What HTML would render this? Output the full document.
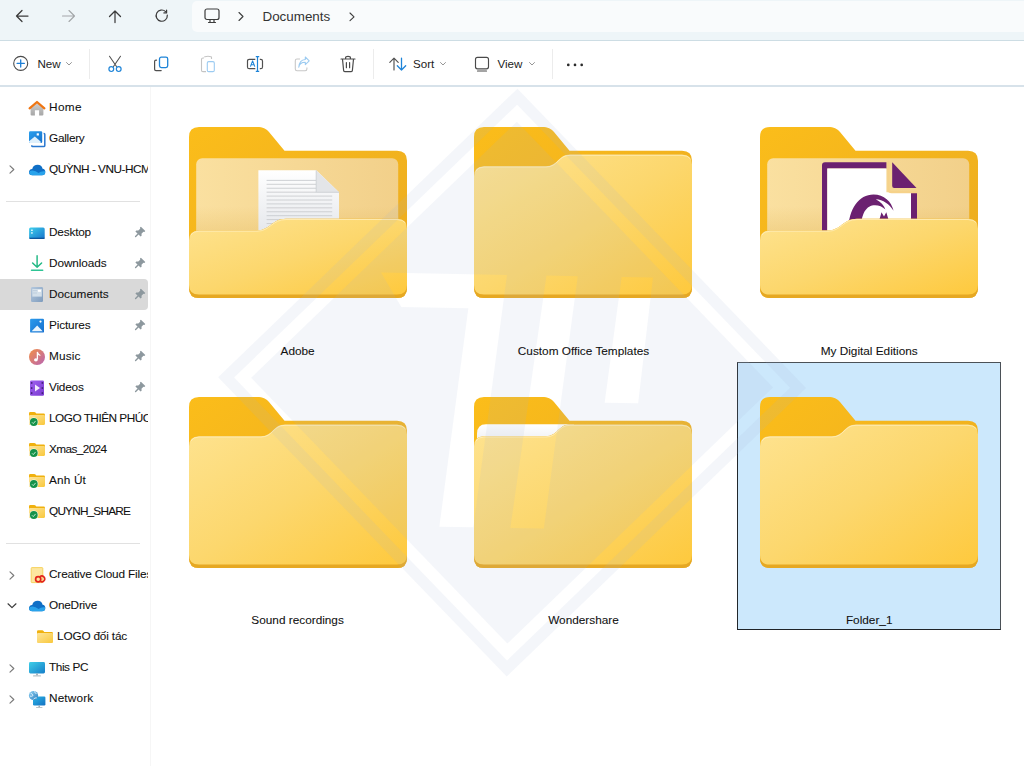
<!DOCTYPE html>
<html><head><meta charset="utf-8">
<style>
*{margin:0;padding:0;box-sizing:border-box}
html,body{width:1024px;height:766px;overflow:hidden;background:#fff}
body{position:relative;font-family:"Liberation Sans",sans-serif;color:#1a1a1a}
.abs{position:absolute}
#top{left:0;top:0;width:1024px;height:41px;background:#eef5f8;border-bottom:1px solid #cddde4}
#addr{left:192px;top:1px;width:840px;height:31px;background:#f9fbfc;border-radius:5px}
#tb{left:0;top:41px;width:1024px;height:46px;background:#fff;border-bottom:2px solid #d7e2ea}
.tbt{font-size:11.6px;color:#1c1c1c;top:57px;line-height:14px}
.sep{width:1px;background:#ececec}
#side{left:0;top:87px;width:151px;height:679px;background:#fff;border-right:1px solid #f6f6f6}
.si{position:absolute;left:0;height:31px;width:148px;font-size:11.8px;line-height:31px;color:#111;-webkit-text-stroke:0.08px #111;white-space:nowrap;overflow:hidden}
.si .t{position:absolute;left:50px;top:-0.4px}
.si svg{position:absolute}
.hsep{position:absolute;left:6px;width:134px;height:1px;background:#e1e1e1}
.lbl{position:absolute;font-size:11.8px;color:#111;-webkit-text-stroke:0.08px #111;text-align:center;width:260px;line-height:14px;white-space:nowrap}
.fold{position:absolute;width:218px;height:171px}
</style></head><body>
<div id="top" class="abs"></div>
<div id="addr" class="abs"></div>
<div id="tb" class="abs"></div>
<div id="side" class="abs"></div>
<!-- MAIN -->
<div class="abs" style="left:737px;top:362px;width:264px;height:268px;background:#cce8fc;border:1px solid #4b5157;border-left-color:#22272b;border-bottom-color:#1f2327"></div>
<svg class="abs" style="left:188.6px;top:127px" width="218" height="171" viewBox="0 0 218 171"><defs>
<linearGradient id="bk1" x1="0" y1="0" x2="1" y2="1"><stop offset="0" stop-color="#fbbd1a"/><stop offset="1" stop-color="#eaaa22"/></linearGradient>
<linearGradient id="fr1" x1="0" y1="0" x2="1" y2="1"><stop offset="0" stop-color="#fee390"/><stop offset="0.5" stop-color="#fcd76d"/><stop offset="1" stop-color="#fec93d"/></linearGradient>
<linearGradient id="ip1" x1="0" y1="0" x2="1" y2="0"><stop offset="0" stop-color="#fae0a0"/><stop offset="1" stop-color="#f2d08a"/></linearGradient>
<linearGradient id="sh1" x1="0" y1="0" x2="0" y2="1"><stop offset="0.6" stop-color="#d9a840" stop-opacity="0"/><stop offset="0.9" stop-color="#d9a840" stop-opacity="0.22"/></linearGradient>
<linearGradient id="pp1" x1="0" y1="0" x2="0" y2="1"><stop offset="0" stop-color="#ffffff"/><stop offset="1" stop-color="#dfe2e7"/></linearGradient>
</defs><path d="M0 10Q0 0 10 0H68C74 0 77 1.5 80 5L95.5 23.8H208Q218 23.8 218 33.8V161Q218 171 208 171H10Q0 171 0 161Z" fill="url(#bk1)"/><rect x="7.2" y="31.2" width="202" height="80" rx="6" fill="url(#ip1)"/><rect x="7.2" y="31.2" width="202" height="80" rx="6" fill="url(#sh1)"/><path d="M69.4 43.3H127.2L150 65.3V120H69.4Z" fill="url(#pp1)"/><path d="M77.6 53.40H127.2" stroke="#c9cccf" stroke-width="0.9"/><path d="M77.6 57.32H127.2" stroke="#c9cccf" stroke-width="0.9"/><path d="M77.6 61.24H127.2" stroke="#c9cccf" stroke-width="0.9"/><path d="M77.6 65.16H127.2" stroke="#c9cccf" stroke-width="0.9"/><path d="M77.6 69.08H143.2" stroke="#c9cccf" stroke-width="0.9"/><path d="M77.6 73.00H143.2" stroke="#c9cccf" stroke-width="0.9"/><path d="M77.6 76.92H143.2" stroke="#c9cccf" stroke-width="0.9"/><path d="M77.6 80.84H143.2" stroke="#c9cccf" stroke-width="0.9"/><path d="M77.6 84.76H143.2" stroke="#c9cccf" stroke-width="0.9"/><path d="M77.6 88.68H143.2" stroke="#c9cccf" stroke-width="0.9"/><path d="M77.6 92.60H143.2" stroke="#c9cccf" stroke-width="0.9"/><path d="M77.6 96.52H143.2" stroke="#c9cccf" stroke-width="0.9"/><path d="M77.6 100.44H143.2" stroke="#c9cccf" stroke-width="0.9"/><path d="M127.2 43.3L150 65.3H127.2Z" fill="#e3e5e8"/><path d="M127.2 43.3V65.3H150" fill="none" stroke="#c8cbd0" stroke-width="0.8"/><path d="M0 113.5Q0 103.5 10 103.5H68C81 103.5 83 91.8 97 91.8H208Q218 91.8 218 101.8V161Q218 171 208 171H10Q0 171 0 161Z" fill="#e6a822"/><path d="M0 113.5Q0 103.5 10 103.5H68C81 103.5 83 91.8 97 91.8H208Q218 91.8 218 101.8V158Q218 167.6 208 167.6H10Q0 167.6 0 158Z" fill="url(#fr1)"/><path d="M2 108Q4 104.2 10 104.2H68C81 104.2 83 92.5 97 92.5H208Q214 92.5 216.5 96" fill="none" stroke="#fff1c4" stroke-width="1" opacity="0.7"/></svg>
<svg class="abs" style="left:473.5px;top:127px" width="218" height="171" viewBox="0 0 218 171"><defs>
<linearGradient id="bk2" x1="0" y1="0" x2="1" y2="1"><stop offset="0" stop-color="#fbbd1a"/><stop offset="1" stop-color="#eaaa22"/></linearGradient>
<linearGradient id="fr2" x1="0" y1="0" x2="1" y2="1"><stop offset="0" stop-color="#fee390"/><stop offset="0.5" stop-color="#fcd76d"/><stop offset="1" stop-color="#fec93d"/></linearGradient>
<linearGradient id="ip2" x1="0" y1="0" x2="1" y2="0"><stop offset="0" stop-color="#fae0a0"/><stop offset="1" stop-color="#f2d08a"/></linearGradient>
<linearGradient id="sh2" x1="0" y1="0" x2="0" y2="1"><stop offset="0.6" stop-color="#d9a840" stop-opacity="0"/><stop offset="0.9" stop-color="#d9a840" stop-opacity="0.22"/></linearGradient>
<linearGradient id="pp2" x1="0" y1="0" x2="0" y2="1"><stop offset="0" stop-color="#ffffff"/><stop offset="1" stop-color="#dfe2e7"/></linearGradient>
</defs><path d="M0 10Q0 0 10 0H68C74 0 77 1.5 80 5L95.5 23.8H208Q218 23.8 218 33.8V161Q218 171 208 171H10Q0 171 0 161Z" fill="url(#bk2)"/><path d="M0 49.3Q0 39.3 10 39.3H72C84 39.3 84 27.6 96 27.6H208Q218 27.6 218 37.6V161Q218 171 208 171H10Q0 171 0 161Z" fill="#e6a822"/><path d="M0 49.3Q0 39.3 10 39.3H72C84 39.3 84 27.6 96 27.6H208Q218 27.6 218 37.6V158Q218 167.6 208 167.6H10Q0 167.6 0 158Z" fill="url(#fr2)"/><path d="M2 44Q4 40 10 40H72C84 40 84 28.3 96 28.3H208Q214 28.3 216.5 32" fill="none" stroke="#fff1c4" stroke-width="1" opacity="0.7"/></svg>
<svg class="abs" style="left:760.1px;top:127px" width="218" height="171" viewBox="0 0 218 171"><defs>
<linearGradient id="bk3" x1="0" y1="0" x2="1" y2="1"><stop offset="0" stop-color="#fbbd1a"/><stop offset="1" stop-color="#eaaa22"/></linearGradient>
<linearGradient id="fr3" x1="0" y1="0" x2="1" y2="1"><stop offset="0" stop-color="#fee390"/><stop offset="0.5" stop-color="#fcd76d"/><stop offset="1" stop-color="#fec93d"/></linearGradient>
<linearGradient id="ip3" x1="0" y1="0" x2="1" y2="0"><stop offset="0" stop-color="#fae0a0"/><stop offset="1" stop-color="#f2d08a"/></linearGradient>
<linearGradient id="sh3" x1="0" y1="0" x2="0" y2="1"><stop offset="0.6" stop-color="#d9a840" stop-opacity="0"/><stop offset="0.9" stop-color="#d9a840" stop-opacity="0.22"/></linearGradient>
<linearGradient id="pp3" x1="0" y1="0" x2="0" y2="1"><stop offset="0" stop-color="#ffffff"/><stop offset="1" stop-color="#dfe2e7"/></linearGradient>
</defs><path d="M0 10Q0 0 10 0H68C74 0 77 1.5 80 5L95.5 23.8H208Q218 23.8 218 33.8V161Q218 171 208 171H10Q0 171 0 161Z" fill="url(#bk3)"/><rect x="7.2" y="31.2" width="202" height="80" rx="6" fill="url(#ip3)"/><rect x="7.2" y="31.2" width="202" height="80" rx="6" fill="url(#sh3)"/><path d="M62 38.3Q62 35.3 65 35.3H126.4V41.5H67.3V120H62Z" fill="#6b2170"/><path d="M67.3 41.5H126.4V65.2H157V120H67.3Z" fill="#fff"/><path d="M151 65.2H157V120H151Z" fill="#6b2170"/><path d="M132.2 35.3L156.5 61H134.2Q132.2 61 132.2 59Z" fill="#6b2170"/><path d="M128.5 34V62Q128.5 65.2 131.7 65.2H157" fill="none" stroke="#f6d28a" stroke-width="2.2"/><path d="M88.3 104C88.3 82 99 67.5 113.5 67.5C124 67.5 131.5 74.5 133.6 83.8C129.5 77 123 72.6 115.8 72.2C121 74.8 124.3 78.5 125.4 82.6C122.5 79.8 119 78.3 115 78.3C106.5 78.3 100.8 86 100.8 104Z" fill="#6b2170"/><path d="M119.6 92L121.5 85.3L124 89.5L126.3 85.3L128.3 92Z" fill="#6b2170"/><path d="M0 113.5Q0 103.5 10 103.5H68C81 103.5 83 91.8 97 91.8H208Q218 91.8 218 101.8V161Q218 171 208 171H10Q0 171 0 161Z" fill="#e6a822"/><path d="M0 113.5Q0 103.5 10 103.5H68C81 103.5 83 91.8 97 91.8H208Q218 91.8 218 101.8V158Q218 167.6 208 167.6H10Q0 167.6 0 158Z" fill="url(#fr3)"/><path d="M2 108Q4 104.2 10 104.2H68C81 104.2 83 92.5 97 92.5H208Q214 92.5 216.5 96" fill="none" stroke="#fff1c4" stroke-width="1" opacity="0.7"/></svg>
<svg class="abs" style="left:188.6px;top:396.7px" width="218" height="171" viewBox="0 0 218 171"><defs>
<linearGradient id="bk4" x1="0" y1="0" x2="1" y2="1"><stop offset="0" stop-color="#fbbd1a"/><stop offset="1" stop-color="#eaaa22"/></linearGradient>
<linearGradient id="fr4" x1="0" y1="0" x2="1" y2="1"><stop offset="0" stop-color="#fee390"/><stop offset="0.5" stop-color="#fcd76d"/><stop offset="1" stop-color="#fec93d"/></linearGradient>
<linearGradient id="ip4" x1="0" y1="0" x2="1" y2="0"><stop offset="0" stop-color="#fae0a0"/><stop offset="1" stop-color="#f2d08a"/></linearGradient>
<linearGradient id="sh4" x1="0" y1="0" x2="0" y2="1"><stop offset="0.6" stop-color="#d9a840" stop-opacity="0"/><stop offset="0.9" stop-color="#d9a840" stop-opacity="0.22"/></linearGradient>
<linearGradient id="pp4" x1="0" y1="0" x2="0" y2="1"><stop offset="0" stop-color="#ffffff"/><stop offset="1" stop-color="#dfe2e7"/></linearGradient>
</defs><path d="M0 10Q0 0 10 0H68C74 0 77 1.5 80 5L95.5 23.8H208Q218 23.8 218 33.8V161Q218 171 208 171H10Q0 171 0 161Z" fill="url(#bk4)"/><path d="M0 49.3Q0 39.3 10 39.3H72C84 39.3 84 27.6 96 27.6H208Q218 27.6 218 37.6V161Q218 171 208 171H10Q0 171 0 161Z" fill="#e6a822"/><path d="M0 49.3Q0 39.3 10 39.3H72C84 39.3 84 27.6 96 27.6H208Q218 27.6 218 37.6V158Q218 167.6 208 167.6H10Q0 167.6 0 158Z" fill="url(#fr4)"/><path d="M2 44Q4 40 10 40H72C84 40 84 28.3 96 28.3H208Q214 28.3 216.5 32" fill="none" stroke="#fff1c4" stroke-width="1" opacity="0.7"/></svg>
<svg class="abs" style="left:473.5px;top:396.7px" width="218" height="171" viewBox="0 0 218 171"><defs>
<linearGradient id="bk5" x1="0" y1="0" x2="1" y2="1"><stop offset="0" stop-color="#fbbd1a"/><stop offset="1" stop-color="#eaaa22"/></linearGradient>
<linearGradient id="fr5" x1="0" y1="0" x2="1" y2="1"><stop offset="0" stop-color="#fee390"/><stop offset="0.5" stop-color="#fcd76d"/><stop offset="1" stop-color="#fec93d"/></linearGradient>
<linearGradient id="ip5" x1="0" y1="0" x2="1" y2="0"><stop offset="0" stop-color="#fae0a0"/><stop offset="1" stop-color="#f2d08a"/></linearGradient>
<linearGradient id="sh5" x1="0" y1="0" x2="0" y2="1"><stop offset="0.6" stop-color="#d9a840" stop-opacity="0"/><stop offset="0.9" stop-color="#d9a840" stop-opacity="0.22"/></linearGradient>
<linearGradient id="pp5" x1="0" y1="0" x2="0" y2="1"><stop offset="0" stop-color="#ffffff"/><stop offset="1" stop-color="#dfe2e7"/></linearGradient>
</defs><path d="M0 10Q0 0 10 0H68C74 0 77 1.5 80 5L95.5 23.8H208Q218 23.8 218 33.8V161Q218 171 208 171H10Q0 171 0 161Z" fill="url(#bk5)"/><path d="M3 37Q3 27.3 12 27.3H100V60H3Z" fill="url(#pp5)"/><path d="M0 49.3Q0 39.3 10 39.3H72C84 39.3 84 27.6 96 27.6H208Q218 27.6 218 37.6V161Q218 171 208 171H10Q0 171 0 161Z" fill="#e6a822"/><path d="M0 49.3Q0 39.3 10 39.3H72C84 39.3 84 27.6 96 27.6H208Q218 27.6 218 37.6V158Q218 167.6 208 167.6H10Q0 167.6 0 158Z" fill="url(#fr5)"/><path d="M2 44Q4 40 10 40H72C84 40 84 28.3 96 28.3H208Q214 28.3 216.5 32" fill="none" stroke="#fff1c4" stroke-width="1" opacity="0.7"/></svg>
<svg class="abs" style="left:760.1px;top:396.7px" width="218" height="171" viewBox="0 0 218 171"><defs>
<linearGradient id="bk6" x1="0" y1="0" x2="1" y2="1"><stop offset="0" stop-color="#fbbd1a"/><stop offset="1" stop-color="#eaaa22"/></linearGradient>
<linearGradient id="fr6" x1="0" y1="0" x2="1" y2="1"><stop offset="0" stop-color="#fee390"/><stop offset="0.5" stop-color="#fcd76d"/><stop offset="1" stop-color="#fec93d"/></linearGradient>
<linearGradient id="ip6" x1="0" y1="0" x2="1" y2="0"><stop offset="0" stop-color="#fae0a0"/><stop offset="1" stop-color="#f2d08a"/></linearGradient>
<linearGradient id="sh6" x1="0" y1="0" x2="0" y2="1"><stop offset="0.6" stop-color="#d9a840" stop-opacity="0"/><stop offset="0.9" stop-color="#d9a840" stop-opacity="0.22"/></linearGradient>
<linearGradient id="pp6" x1="0" y1="0" x2="0" y2="1"><stop offset="0" stop-color="#ffffff"/><stop offset="1" stop-color="#dfe2e7"/></linearGradient>
</defs><path d="M0 10Q0 0 10 0H68C74 0 77 1.5 80 5L95.5 23.8H208Q218 23.8 218 33.8V161Q218 171 208 171H10Q0 171 0 161Z" fill="url(#bk6)"/><path d="M0 49.3Q0 39.3 10 39.3H72C84 39.3 84 27.6 96 27.6H208Q218 27.6 218 37.6V161Q218 171 208 171H10Q0 171 0 161Z" fill="#e6a822"/><path d="M0 49.3Q0 39.3 10 39.3H72C84 39.3 84 27.6 96 27.6H208Q218 27.6 218 37.6V158Q218 167.6 208 167.6H10Q0 167.6 0 158Z" fill="url(#fr6)"/><path d="M2 44Q4 40 10 40H72C84 40 84 28.3 96 28.3H208Q214 28.3 216.5 32" fill="none" stroke="#fff1c4" stroke-width="1" opacity="0.7"/></svg>
<svg class="abs" style="left:0;top:0;pointer-events:none" width="1024" height="766" viewBox="0 0 1024 766"><path fill-rule="evenodd" transform="rotate(1.05 512.1 382.6)" d="M512.1 88.6L806.1 382.6L512.1 676.6L218.1 382.6Z M512.1 104.6L790.1 382.6L512.1 660.6L234.1 382.6Z" fill="#a3b4d5" fill-opacity="0.12"/><defs><mask id="wmm"><rect width="1024" height="766" fill="#fff"/><path d="M379 275L505 275L476 528L442 528L467 309L400 309Z M544.5 275L575.8 275L546.5 528L513 528Z M619.7 275L651 275L638.5 401L605 401Z" fill="#000"/></mask></defs><path mask="url(#wmm)" transform="rotate(1.05 512.1 382.6)" d="M512.1 121.6L773.1 382.6L512.1 643.6L251.1 382.6Z" fill="#a3b4d5" fill-opacity="0.12"/></svg>
<div class="lbl" style="left:167.6px;top:344px">Adobe</div>
<div class="lbl" style="left:453.5px;top:344px">Custom Office Templates</div>
<div class="lbl" style="left:739.2px;top:344px">My Digital Editions</div>
<div class="lbl" style="left:167.6px;top:613.3px">Sound recordings</div>
<div class="lbl" style="left:453.5px;top:613.3px">Wondershare</div>
<div class="lbl" style="left:739.2px;top:613.3px">Folder_1</div>
<!-- /MAIN -->
<!-- SIDE -->
<div class="si" style="top:92.0px"><svg style="left:28px;top:7px" width="18" height="18" viewBox="0 0 18 18"><defs><linearGradient id="hg" x1="0" y1="0" x2="0" y2="1"><stop offset="0" stop-color="#d2d2d2"/><stop offset="1" stop-color="#a6a6a6"/></linearGradient></defs><path d="M2.6 8.2L9 3L15.4 8.2V15.4Q15.4 16.5 14.3 16.5H11.1V11.2H6.9V16.5H3.7Q2.6 16.5 2.6 15.4Z" fill="url(#hg)"/><path d="M1.6 9.4L9 3L16.4 9.4" fill="none" stroke="#ef7512" stroke-width="2.2" stroke-linecap="round" stroke-linejoin="round"/></svg><span class="t" style="left:49px;letter-spacing:0.383px">Home</span></div>
<div class="si" style="top:123.0px"><svg style="left:28px;top:7px" width="18" height="18" viewBox="0 0 18 18"><defs><linearGradient id="gg" x1="0" y1="0" x2="1" y2="1"><stop offset="0" stop-color="#2aa0ee"/><stop offset="1" stop-color="#1570cc"/></linearGradient></defs><path d="M15.6 3.6H16Q16.8 3.6 16.8 4.4V15.4Q16.8 16.5 15.7 16.5H4.6Q3.8 16.5 3.8 15.7V15.3" fill="none" stroke="#2a78d0" stroke-width="1.5"/><rect x="1" y="1.2" width="13.2" height="11.8" rx="1.2" fill="url(#gg)"/><path d="M1 11.3L6.8 6.5L12.6 11.5V13H2.2Q1 13 1 11.8Z" fill="#dff0fc"/><rect x="8.7" y="3.3" width="2.2" height="2.2" fill="#fff"/></svg><span class="t" style="left:49px;letter-spacing:-0.268px">Gallery</span></div>
<div class="si" style="top:154.0px"><svg style="left:7px;top:10px" width="10" height="11" viewBox="0 0 10 11" fill="none" stroke="#7a7a7a" stroke-width="1.15" stroke-linecap="round" stroke-linejoin="round"><path d="M3 1.8L6.8 5.5L3 9.2"/></svg><svg style="left:28px;top:9px" width="18" height="13" viewBox="0 0 18 13"><path d="M4.3 12.2Q1 12.2 1 9.2Q1 6.3 4.2 6Q5.4 1.8 9.7 1.8Q13.7 1.8 14.6 5.7Q17.3 6.1 17.3 9Q17.3 12.2 14 12.2Z" fill="#0f6fc6"/><path d="M1.1 9.6Q1.6 7.2 4.6 7.4Q7.5 7.6 10.6 10.1Q13 7.6 17.2 8.3Q17.5 12.2 14 12.2H4.3Q1.4 12.2 1.1 9.6Z" fill="#29a3eb"/></svg><span class="t" style="left:49px;letter-spacing:-0.5px">QUỲNH - VNU-HCM</span></div>
<div class="si" style="top:217.0px"><svg style="left:28px;top:8px" width="18" height="16" viewBox="0 0 18 16"><defs><linearGradient id="dg" x1="0" y1="0" x2="1" y2="1"><stop offset="0" stop-color="#40d0ec"/><stop offset="1" stop-color="#1673cc"/></linearGradient></defs><rect x="1.1" y="2.4" width="15.6" height="11.6" rx="1.5" fill="url(#dg)"/><path d="M1.5 13.3H16.5" stroke="#0c4e96" stroke-width="1.2"/><rect x="3" y="4.6" width="1.8" height="1.3" fill="#e6f7fc"/><rect x="3" y="7.3" width="1.8" height="1.3" fill="#e6f7fc"/></svg><span class="t" style="left:49px;letter-spacing:-0.183px">Desktop</span><svg style="left:134px;top:8.5px" width="12" height="12" viewBox="0 0 12 12"><path d="M6.9 0.7L11.3 5.1L10.4 6L9.4 5.8L7.5 7.7L7.6 9.7L6.6 10.6L1.4 5.4L2.3 4.5L4.3 4.6L6.2 2.7L6 1.6Z" fill="#8d989e"/><path d="M4.3 7.7L1.6 10.4" stroke="#8d989e" stroke-width="1.4" stroke-linecap="round"/></svg></div>
<div class="si" style="top:248.0px"><svg style="left:28px;top:6px" width="18" height="18" viewBox="0 0 18 18" fill="none" stroke="#21b884" stroke-width="1.45" stroke-linecap="round" stroke-linejoin="round"><path d="M9.1 1.7V13.3M4.6 8.9L9.1 13.3L13.6 8.9"/><path d="M3.5 16.2H14.7" stroke="#2dc494"/></svg><span class="t" style="left:49px;letter-spacing:-0.097px">Downloads</span><svg style="left:134px;top:8.5px" width="12" height="12" viewBox="0 0 12 12"><path d="M6.9 0.7L11.3 5.1L10.4 6L9.4 5.8L7.5 7.7L7.6 9.7L6.6 10.6L1.4 5.4L2.3 4.5L4.3 4.6L6.2 2.7L6 1.6Z" fill="#8d989e"/><path d="M4.3 7.7L1.6 10.4" stroke="#8d989e" stroke-width="1.4" stroke-linecap="round"/></svg></div>
<div class="si" style="top:279px;background:#d9d9d9;border-radius:0 4px 4px 0"><svg style="left:29px;top:7px" width="16" height="17" viewBox="0 0 16 17"><defs><linearGradient id="og" x1="0" y1="0" x2="1" y2="1"><stop offset="0" stop-color="#b5c9de"/><stop offset="1" stop-color="#7f9cbd"/></linearGradient></defs><rect x="2" y="1" width="12" height="15" rx="1.2" fill="url(#og)"/><rect x="3.3" y="3" width="9.5" height="7.6" fill="#d4e0ea"/><rect x="9" y="3.8" width="3" height="2" fill="#fff"/><path d="M3.8 4.6H8M3.8 7H8" stroke="#b9cadb" stroke-width="0.8"/></svg><span class="t" style="left:49px;letter-spacing:0.003px">Documents</span><svg style="left:134px;top:8.5px" width="12" height="12" viewBox="0 0 12 12"><path d="M6.9 0.7L11.3 5.1L10.4 6L9.4 5.8L7.5 7.7L7.6 9.7L6.6 10.6L1.4 5.4L2.3 4.5L4.3 4.6L6.2 2.7L6 1.6Z" fill="#8d989e"/><path d="M4.3 7.7L1.6 10.4" stroke="#8d989e" stroke-width="1.4" stroke-linecap="round"/></svg></div>
<div class="si" style="top:310.0px"><svg style="left:28px;top:8px" width="18" height="16" viewBox="0 0 18 16"><defs><linearGradient id="pg" x1="0" y1="0" x2="1" y2="1"><stop offset="0" stop-color="#2b9bec"/><stop offset="1" stop-color="#156fcf"/></linearGradient></defs><rect x="2.1" y="0.8" width="13.9" height="13.8" rx="1.2" fill="url(#pg)"/><path d="M3.6 13.2L9.2 7.6L14.7 13.2Z" fill="#eaf5fd"/><circle cx="12.5" cy="3.6" r="1.1" fill="#fff"/></svg><span class="t" style="left:49px;letter-spacing:-0.153px">Pictures</span><svg style="left:134px;top:8.5px" width="12" height="12" viewBox="0 0 12 12"><path d="M6.9 0.7L11.3 5.1L10.4 6L9.4 5.8L7.5 7.7L7.6 9.7L6.6 10.6L1.4 5.4L2.3 4.5L4.3 4.6L6.2 2.7L6 1.6Z" fill="#8d989e"/><path d="M4.3 7.7L1.6 10.4" stroke="#8d989e" stroke-width="1.4" stroke-linecap="round"/></svg></div>
<div class="si" style="top:341.0px"><svg style="left:28px;top:7px" width="18" height="18" viewBox="0 0 18 18"><defs><linearGradient id="mg" x1="0" y1="0" x2="1" y2="1"><stop offset="0" stop-color="#f39045"/><stop offset="1" stop-color="#b864b4"/></linearGradient></defs><circle cx="9" cy="9" r="8" fill="url(#mg)"/><path d="M9.4 4.2V11.3" stroke="#fff" stroke-width="1.3"/><path d="M9.4 4.2Q10.2 6.5 12 7.3" fill="none" stroke="#fff" stroke-width="1.1" stroke-linecap="round"/><ellipse cx="7.9" cy="11.8" rx="1.9" ry="1.6" fill="#fff"/></svg><span class="t" style="left:49px;letter-spacing:0.138px">Music</span><svg style="left:134px;top:8.5px" width="12" height="12" viewBox="0 0 12 12"><path d="M6.9 0.7L11.3 5.1L10.4 6L9.4 5.8L7.5 7.7L7.6 9.7L6.6 10.6L1.4 5.4L2.3 4.5L4.3 4.6L6.2 2.7L6 1.6Z" fill="#8d989e"/><path d="M4.3 7.7L1.6 10.4" stroke="#8d989e" stroke-width="1.4" stroke-linecap="round"/></svg></div>
<div class="si" style="top:372.0px"><svg style="left:28px;top:8px" width="18" height="17" viewBox="0 0 18 17"><defs><linearGradient id="vg" x1="0" y1="0" x2="1" y2="1"><stop offset="0" stop-color="#a05ff0"/><stop offset="1" stop-color="#7a3cd0"/></linearGradient></defs><rect x="2" y="0.5" width="14" height="15.2" rx="1.3" fill="url(#vg)"/><path d="M7 4.5L12 8L7 11.5Z" fill="#f3eafc"/><g fill="#3a1a6a"><rect x="2.9" y="2.2" width="1.5" height="1.5"/><rect x="2.9" y="7.3" width="1.5" height="1.5"/><rect x="2.9" y="12.3" width="1.5" height="1.5"/><rect x="13.6" y="2.2" width="1.5" height="1.5"/><rect x="13.6" y="7.3" width="1.5" height="1.5"/><rect x="13.6" y="12.3" width="1.5" height="1.5"/></g></svg><span class="t" style="left:49px;letter-spacing:-0.21px">Videos</span><svg style="left:134px;top:8.5px" width="12" height="12" viewBox="0 0 12 12"><path d="M6.9 0.7L11.3 5.1L10.4 6L9.4 5.8L7.5 7.7L7.6 9.7L6.6 10.6L1.4 5.4L2.3 4.5L4.3 4.6L6.2 2.7L6 1.6Z" fill="#8d989e"/><path d="M4.3 7.7L1.6 10.4" stroke="#8d989e" stroke-width="1.4" stroke-linecap="round"/></svg></div>
<div class="si" style="top:403.0px"><svg style="left:28px;top:6px" width="18" height="17" viewBox="0 0 18 17"><defs><linearGradient id="sf1" x1="0" y1="0" x2="1" y2="1"><stop offset="0" stop-color="#fde49a"/><stop offset="1" stop-color="#f9c83c"/></linearGradient></defs><path d="M1 4.3Q1 3 2.3 3H6.3Q7 3 7.5 3.6L8.3 4.6H15.7Q17 4.6 17 5.9V7H1Z" fill="#f0b10e"/><rect x="1" y="5.9" width="16" height="10" rx="1.1" fill="url(#sf1)"/><circle cx="5.8" cy="13" r="4.6" fill="#fff" opacity="0.85"/><circle cx="5.8" cy="13" r="3.9" fill="#15924a"/><path d="M4 13.3L5.3 14.6L7.6 11.9" fill="none" stroke="#bfe8cf" stroke-width="1"/></svg><span class="t" style="left:49px;letter-spacing:-0.5px">LOGO THIÊN PHÚC</span></div>
<div class="si" style="top:434.0px"><svg style="left:28px;top:6px" width="18" height="17" viewBox="0 0 18 17"><defs><linearGradient id="sf2" x1="0" y1="0" x2="1" y2="1"><stop offset="0" stop-color="#fde49a"/><stop offset="1" stop-color="#f9c83c"/></linearGradient></defs><path d="M1 4.3Q1 3 2.3 3H6.3Q7 3 7.5 3.6L8.3 4.6H15.7Q17 4.6 17 5.9V7H1Z" fill="#f0b10e"/><rect x="1" y="5.9" width="16" height="10" rx="1.1" fill="url(#sf2)"/><circle cx="5.8" cy="13" r="4.6" fill="#fff" opacity="0.85"/><circle cx="5.8" cy="13" r="3.9" fill="#15924a"/><path d="M4 13.3L5.3 14.6L7.6 11.9" fill="none" stroke="#bfe8cf" stroke-width="1"/></svg><span class="t" style="left:49px;letter-spacing:-0.608px">Xmas_2024</span></div>
<div class="si" style="top:465.0px"><svg style="left:28px;top:6px" width="18" height="17" viewBox="0 0 18 17"><defs><linearGradient id="sf3" x1="0" y1="0" x2="1" y2="1"><stop offset="0" stop-color="#fde49a"/><stop offset="1" stop-color="#f9c83c"/></linearGradient></defs><path d="M1 4.3Q1 3 2.3 3H6.3Q7 3 7.5 3.6L8.3 4.6H15.7Q17 4.6 17 5.9V7H1Z" fill="#f0b10e"/><rect x="1" y="5.9" width="16" height="10" rx="1.1" fill="url(#sf3)"/><circle cx="5.8" cy="13" r="4.6" fill="#fff" opacity="0.85"/><circle cx="5.8" cy="13" r="3.9" fill="#15924a"/><path d="M4 13.3L5.3 14.6L7.6 11.9" fill="none" stroke="#bfe8cf" stroke-width="1"/></svg><span class="t" style="left:49px;letter-spacing:0.153px">Anh Út</span></div>
<div class="si" style="top:496.0px"><svg style="left:28px;top:6px" width="18" height="17" viewBox="0 0 18 17"><defs><linearGradient id="sf4" x1="0" y1="0" x2="1" y2="1"><stop offset="0" stop-color="#fde49a"/><stop offset="1" stop-color="#f9c83c"/></linearGradient></defs><path d="M1 4.3Q1 3 2.3 3H6.3Q7 3 7.5 3.6L8.3 4.6H15.7Q17 4.6 17 5.9V7H1Z" fill="#f0b10e"/><rect x="1" y="5.9" width="16" height="10" rx="1.1" fill="url(#sf4)"/><circle cx="5.8" cy="13" r="4.6" fill="#fff" opacity="0.85"/><circle cx="5.8" cy="13" r="3.9" fill="#15924a"/><path d="M4 13.3L5.3 14.6L7.6 11.9" fill="none" stroke="#bfe8cf" stroke-width="1"/></svg><span class="t" style="left:49px;letter-spacing:-0.801px">QUYNH_SHARE</span></div>
<div class="si" style="top:559.5px"><svg style="left:7px;top:10px" width="10" height="11" viewBox="0 0 10 11" fill="none" stroke="#7a7a7a" stroke-width="1.15" stroke-linecap="round" stroke-linejoin="round"><path d="M3 1.8L6.8 5.5L3 9.2"/></svg><svg style="left:28px;top:6px" width="18" height="18" viewBox="0 0 18 18"><rect x="3.2" y="1.6" width="11.6" height="15" rx="0.8" fill="#fde7a0" stroke="#f5cf55" stroke-width="0.9"/><circle cx="10.2" cy="13.3" r="2.6" fill="none" stroke="#e3261c" stroke-width="1.7"/><path d="M12 10.6A2.9 2.9 0 1 1 12.2 15.4" fill="none" stroke="#e3261c" stroke-width="1.7"/></svg><span class="t" style="left:49px;letter-spacing:-0.15px">Creative Cloud Files</span></div>
<div class="si" style="top:590.5px"><svg style="left:6px;top:10px" width="12" height="10" viewBox="0 0 12 10" fill="none" stroke="#3a3a3a" stroke-width="1.2" stroke-linecap="round" stroke-linejoin="round"><path d="M2 2.8L6 6.6L10 2.8"/></svg><svg style="left:28px;top:8px" width="18" height="13" viewBox="0 0 18 13"><path d="M4.3 12.2Q1 12.2 1 9.2Q1 6.3 4.2 6Q5.4 1.8 9.7 1.8Q13.7 1.8 14.6 5.7Q17.3 6.1 17.3 9Q17.3 12.2 14 12.2Z" fill="#0f6fc6"/><path d="M1.1 9.6Q1.6 7.2 4.6 7.4Q7.5 7.6 10.6 10.1Q13 7.6 17.2 8.3Q17.5 12.2 14 12.2H4.3Q1.4 12.2 1.1 9.6Z" fill="#29a3eb"/></svg><span class="t" style="left:49px;letter-spacing:-0.229px">OneDrive</span></div>
<div class="si" style="top:621.5px"><svg style="left:36px;top:6px" width="18" height="16" viewBox="0 0 18 16"><defs><linearGradient id="lf" x1="0" y1="0" x2="1" y2="1"><stop offset="0" stop-color="#fde49a"/><stop offset="1" stop-color="#f9c83c"/></linearGradient></defs><path d="M1 3.6Q1 2.3 2.3 2.3H6.3Q7 2.3 7.5 2.9L8.3 3.9H15.7Q17 3.9 17 5.2V6.5H1Z" fill="#f0b10e"/><rect x="1" y="5" width="16" height="10" rx="1.1" fill="url(#lf)"/></svg><span class="t" style="left:57px;letter-spacing:-0.177px">LOGO đối tác</span></div>
<div class="si" style="top:652.5px"><svg style="left:7px;top:10px" width="10" height="11" viewBox="0 0 10 11" fill="none" stroke="#7a7a7a" stroke-width="1.15" stroke-linecap="round" stroke-linejoin="round"><path d="M3 1.8L6.8 5.5L3 9.2"/></svg><svg style="left:28px;top:7px" width="18" height="18" viewBox="0 0 18 18"><defs><linearGradient id="tg" x1="0" y1="0" x2="1" y2="1"><stop offset="0" stop-color="#3fcfe8"/><stop offset="1" stop-color="#157dc9"/></linearGradient></defs><rect x="1" y="2" width="16" height="11.5" rx="1.4" fill="url(#tg)"/><rect x="8.2" y="13.5" width="1.6" height="2" fill="#9aa6ad"/><rect x="5" y="15.3" width="8" height="1.3" rx="0.5" fill="#b9c3c9"/></svg><span class="t" style="left:49px;letter-spacing:-0.421px">This PC</span></div>
<div class="si" style="top:683.5px"><svg style="left:7px;top:10px" width="10" height="11" viewBox="0 0 10 11" fill="none" stroke="#7a7a7a" stroke-width="1.15" stroke-linecap="round" stroke-linejoin="round"><path d="M3 1.8L6.8 5.5L3 9.2"/></svg><svg style="left:28px;top:6px" width="18" height="19" viewBox="0 0 18 19"><defs><linearGradient id="ng" x1="0" y1="0" x2="1" y2="1"><stop offset="0" stop-color="#2bb6e6"/><stop offset="1" stop-color="#1370c2"/></linearGradient><linearGradient id="ng2" x1="0" y1="0" x2="1" y2="1"><stop offset="0" stop-color="#8ed0f2"/><stop offset="1" stop-color="#2a7fc0"/></linearGradient></defs><rect x="5" y="6.5" width="12.4" height="9" rx="1.2" fill="url(#ng)"/><rect x="10.5" y="15.5" width="1.4" height="1.6" fill="#9aa6ad"/><rect x="8" y="16.9" width="6.5" height="1.2" rx="0.5" fill="#b9c3c9"/><circle cx="5.5" cy="5.5" r="4.6" fill="url(#ng2)"/><path d="M2.6 3.2Q4.8 3.9 5 5.6Q3.4 6.8 2 6.1M6.6 1.3Q6.5 3.3 8.5 3.6M5.5 9.2Q6.8 7.5 8.8 7.9" fill="none" stroke="#e3f4fc" stroke-width="0.9"/></svg><span class="t" style="left:49px;letter-spacing:0.147px">Network</span></div>
<div class="hsep" style="top:201px"></div>
<div class="hsep" style="top:543px"></div>
<!-- /SIDE -->
<!-- top nav icons -->
<svg class="abs" style="left:14px;top:8px" width="16" height="16" viewBox="0 0 16 16" fill="none" stroke="#3b3b3b" stroke-width="1.25" stroke-linecap="round" stroke-linejoin="round"><path d="M14 8H2.5M8 2.5L2.5 8L8 13.5"/></svg>
<svg class="abs" style="left:61px;top:8px" width="16" height="16" viewBox="0 0 16 16" fill="none" stroke="#a3a6a9" stroke-width="1.1" stroke-linecap="round" stroke-linejoin="round"><path d="M1.5 8H13.5M8 2.5L13.5 8L8 13.5"/></svg>
<svg class="abs" style="left:107px;top:8px" width="16" height="16" viewBox="0 0 16 16" fill="none" stroke="#3b3b3b" stroke-width="1.25" stroke-linecap="round" stroke-linejoin="round"><path d="M8 14.5V3M2.5 8.5L8 3L13.5 8.5"/></svg>
<svg class="abs" style="left:154px;top:8px" width="16" height="16" viewBox="0 0 16 16" fill="none" stroke="#3b3b3b" stroke-width="1.2" stroke-linecap="round" stroke-linejoin="round"><path d="M13.3 7.2A5.6 5.6 0 1 1 11.6 3.6"/><path d="M12.6 2.2V4.9H9.9" /></svg>
<svg class="abs" style="left:204px;top:8px" width="16" height="16" viewBox="0 0 16 16" fill="none" stroke="#3d3d3d" stroke-width="1.2" stroke-linecap="round" stroke-linejoin="round"><rect x="1" y="1" width="14" height="10.5" rx="2"/><path d="M6 12v2M10 12v2M4.5 14.5h7"/></svg>
<svg class="abs" style="left:236px;top:11px" width="10" height="11" viewBox="0 0 10 11" fill="none" stroke="#3d3d3d" stroke-width="1.1" stroke-linecap="round" stroke-linejoin="round"><path d="M3 1.5L7 5.5L3 9.5"/></svg>
<div class="abs" style="left:262.5px;top:9px;font-size:13.4px;line-height:16px;color:#333">Documents</div>
<svg class="abs" style="left:347px;top:11px" width="10" height="11" viewBox="0 0 10 11" fill="none" stroke="#3d3d3d" stroke-width="1.1" stroke-linecap="round" stroke-linejoin="round"><path d="M3 2L7 5.8L3 9.6"/></svg>

<!-- toolbar -->
<svg class="abs" style="left:12px;top:55px" width="18" height="18" viewBox="0 0 18 18" fill="none"><circle cx="8.7" cy="8.4" r="7" stroke="#4a4a4a" stroke-width="1.1"/><path d="M8.7 4.8V12M5.1 8.4H12.3" stroke="#1e7fd6" stroke-width="1.3" stroke-linecap="round"/></svg>
<div class="abs tbt" style="left:37.5px">New</div>
<svg class="abs" style="left:65px;top:61px" width="8" height="6" viewBox="0 0 8 6" fill="none" stroke="#8a8a8a" stroke-width="0.9" stroke-linecap="round" stroke-linejoin="round"><path d="M1.5 1.5L4 4L6.5 1.5"/></svg>
<div class="abs sep" style="left:89px;top:49px;height:30px"></div>

<svg class="abs" style="left:106px;top:55px" width="18" height="18" viewBox="0 0 18 18" fill="none"><path d="M3.5 1.2L10.5 11.5M14.5 1.2L7.5 11.5" stroke="#505050" stroke-width="1.05" stroke-linecap="round"/><circle cx="5.3" cy="14.1" r="2.4" stroke="#1e84d8" stroke-width="1.2"/><circle cx="12.7" cy="14.1" r="2.4" stroke="#1e84d8" stroke-width="1.2"/></svg>
<svg class="abs" style="left:152px;top:55px" width="18" height="18" viewBox="0 0 18 18" fill="none"><path d="M4.5 5.2H4Q2.6 5.2 2.6 6.6V14.2Q2.6 15.6 4 15.6H9.2" stroke="#4f4f4f" stroke-width="1.2" stroke-linecap="round"/><rect x="7.5" y="2.1" width="8.2" height="10.5" rx="1.8" stroke="#1e84d8" stroke-width="1.3"/></svg>
<svg class="abs" style="left:199px;top:55px" width="18" height="18" viewBox="0 0 18 18" fill="none"><path d="M5 3H4Q2.5 3 2.5 4.5V15.2Q2.5 16.6 4 16.6H7" stroke="#c4c4c4" stroke-width="1.1"/><path d="M5.5 2.2Q5.5 1.2 9 1.2Q12.5 1.2 12.5 2.2V4" stroke="#c4c4c4" stroke-width="1.1"/><rect x="8.3" y="6.6" width="7" height="10" rx="1.4" stroke="#9ccbf1" stroke-width="1.1"/></svg>
<svg class="abs" style="left:246px;top:55px" width="18" height="18" viewBox="0 0 18 18" fill="none"><path d="M9.3 4.3H3.3Q1.5 4.3 1.5 6.1V11.9Q1.5 13.7 3.3 13.7H9.3M13.8 4.3H14.7Q16.5 4.3 16.5 6.1V11.9Q16.5 13.7 14.7 13.7H13.8" stroke="#505050" stroke-width="1.2"/><path d="M4.4 11.6L6.6 5.9L8.8 11.6M5.2 9.8H8" stroke="#1e84d8" stroke-width="1.1" stroke-linejoin="round"/><path d="M11.5 1.6V16.4M9.8 1.6H13.2M9.8 16.4H13.2" stroke="#1e84d8" stroke-width="1.2"/></svg>
<svg class="abs" style="left:293px;top:55px" width="18" height="18" viewBox="0 0 18 18" fill="none"><path d="M7 4H4Q2.3 4 2.3 5.7V14Q2.3 15.7 4 15.7H12.2Q13.9 15.7 13.9 14V12.5" stroke="#c8c8c8" stroke-width="1.1"/><path d="M5.8 12.2Q6.5 7.2 12.3 7.2V9.6L16.2 5.8L12.3 2V4.5Q6.3 4.9 5.8 12.2Z" stroke="#9ccbf1" stroke-width="1.05" stroke-linejoin="round"/></svg>
<svg class="abs" style="left:339px;top:55px" width="18" height="18" viewBox="0 0 18 18" fill="none" stroke="#4a4a4a" stroke-width="1.2" stroke-linecap="round" stroke-linejoin="round"><path d="M2 4H16M6.6 3.6V2.6Q6.6 1.4 9 1.4Q11.4 1.4 11.4 2.6V3.6M3.5 4.3L4.6 15.3Q4.8 16.7 6.2 16.7H11.8Q13.2 16.7 13.4 15.3L14.5 4.3M7.4 7.5V12.7M10.6 7.5V12.7"/></svg>
<div class="abs sep" style="left:373px;top:49px;height:30px"></div>

<svg class="abs" style="left:388px;top:55px" width="20" height="18" viewBox="0 0 20 18" fill="none" stroke-linecap="round" stroke-linejoin="round"><path d="M6 15V3.2M1.8 7.4L6 3.2L10.2 7.4" stroke="#505050" stroke-width="1.15"/><path d="M13.5 3.2V15M9.3 10.8L13.5 15L17.7 10.8" stroke="#1e84d8" stroke-width="1.3"/></svg>
<div class="abs tbt" style="left:413px">Sort</div>
<svg class="abs" style="left:439px;top:61px" width="8" height="6" viewBox="0 0 8 6" fill="none" stroke="#8a8a8a" stroke-width="0.9" stroke-linecap="round" stroke-linejoin="round"><path d="M1.5 1.5L4 4L6.5 1.5"/></svg>
<svg class="abs" style="left:473px;top:55px" width="18" height="18" viewBox="0 0 18 18" fill="none" stroke="#4a4a4a" stroke-width="1.15" stroke-linecap="round"><rect x="2.5" y="2.4" width="13" height="11.4" rx="2"/><path d="M4.5 16H13.5"/></svg>
<div class="abs tbt" style="left:497.5px">View</div>
<svg class="abs" style="left:528px;top:61px" width="8" height="6" viewBox="0 0 8 6" fill="none" stroke="#8a8a8a" stroke-width="0.9" stroke-linecap="round" stroke-linejoin="round"><path d="M1.5 1.5L4 4L6.5 1.5"/></svg>
<div class="abs sep" style="left:552px;top:49px;height:30px"></div>
<svg class="abs" style="left:565px;top:62px" width="20" height="6" viewBox="0 0 20 6" fill="#2b2b2b"><circle cx="3.3" cy="2.9" r="1.35"/><circle cx="10" cy="2.9" r="1.35"/><circle cx="16.7" cy="2.9" r="1.35"/></svg>

</body></html>
